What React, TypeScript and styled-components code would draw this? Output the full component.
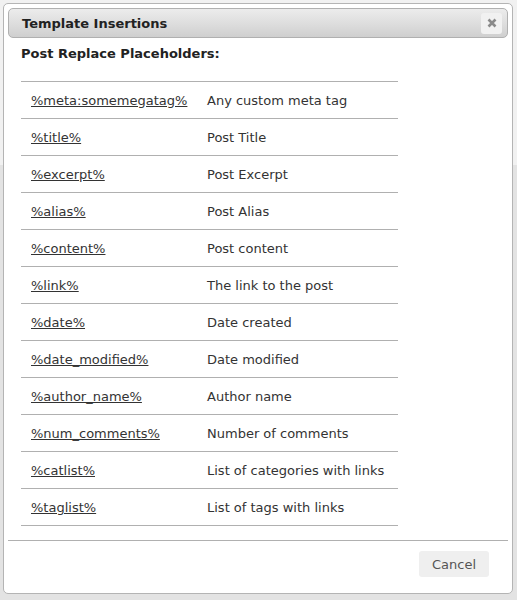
import React from "react";
import styled, { createGlobalStyle } from "styled-components";

const Global = createGlobalStyle`
  html, body { margin: 0; padding: 0; }
  body {
    background: linear-gradient(to bottom, #f1f1f1 0, #f1f1f1 165px, #e3e3e3 165px, #e3e3e3 100%);
    min-height: 600px;
    font-family: "DejaVu Sans", Verdana, sans-serif;
    color: #333;
  }
`;

const Dialog = styled.div`
  margin: 3px 0 0 3px;
  width: 510px;
  height: 591px;
  box-sizing: border-box;
  border: 1px solid #b4b4b4;
  border-radius: 5px;
  background: #fff;
  padding: 4px;
  display: flex;
  flex-direction: column;
`;

const TitleBar = styled.div`
  height: 30px;
  box-sizing: border-box;
  border: 1px solid #b0b0b0;
  border-radius: 5px;
  background: linear-gradient(to bottom, #ececec 0%, #dedede 50%, #cfcfcf 100%);
  display: flex;
  align-items: center;
  justify-content: space-between;
  padding: 0 5px 0 13px;
`;

const Title = styled.span`
  font-weight: bold;
  font-size: 13px;
  color: #222;
`;

const CloseButton = styled.button`
  width: 21px;
  height: 21px;
  border: none;
  border-radius: 3px;
  background: #f1f1f1;
  display: flex;
  align-items: center;
  justify-content: center;
  padding: 0;
`;

const Content = styled.div`
  flex: 1;
  padding: 0 13px;
`;

const Heading = styled.h3`
  margin: 0;
  padding-top: 8px;
  height: 35px;
  font-size: 13px;
  font-weight: bold;
  line-height: 16px;
  color: #222;
`;

const Table = styled.table`
  width: 377px;
  border-collapse: collapse;
  font-size: 13px;
  border-top: 1px solid #b0b0b0;
`;

const Row = styled.tr`
  height: 37px;
  border-bottom: 1px solid #b0b0b0;
`;

const KeyCell = styled.td`
  width: 176px;
  padding: 0 0 0 10px;
  vertical-align: middle;
`;

const DescCell = styled.td`
  padding: 0;
  vertical-align: middle;
  color: #333;
`;

const Tag = styled.a`
  color: #333;
  text-decoration: underline;
`;

const Footer = styled.div`
  border-top: 1px solid #b0b0b0;
  height: 49px;
  box-sizing: border-box;
  display: flex;
  justify-content: flex-end;
  align-items: flex-start;
  padding: 10px 19px 0 0;
`;

const CancelButton = styled.button`
  width: 70px;
  height: 26px;
  border: none;
  border-radius: 3px;
  background: #efefef;
  color: #555;
  font-family: "DejaVu Sans", Verdana, sans-serif;
  font-size: 13px;
  padding: 0;
`;

const rows: [string, string][] = [
  ["%meta:somemegatag%", "Any custom meta tag"],
  ["%title%", "Post Title"],
  ["%excerpt%", "Post Excerpt"],
  ["%alias%", "Post Alias"],
  ["%content%", "Post content"],
  ["%link%", "The link to the post"],
  ["%date%", "Date created"],
  ["%date_modified%", "Date modified"],
  ["%author_name%", "Author name"],
  ["%num_comments%", "Number of comments"],
  ["%catlist%", "List of categories with links"],
  ["%taglist%", "List of tags with links"],
];

export default function App() {
  return (
    <>
      <Global />
      <Dialog>
        <TitleBar>
          <Title>Template Insertions</Title>
          <CloseButton aria-label="close">
            <svg width="10" height="10" viewBox="0 0 10 10">
              <path d="M1.5 1.5 L8.5 8.5 M8.5 1.5 L1.5 8.5" stroke="#8a8a8a" strokeWidth="2.6" strokeLinecap="butt" />
            </svg>
          </CloseButton>
        </TitleBar>
        <Content>
          <Heading>Post Replace Placeholders:</Heading>
          <Table>
            <tbody>
              {rows.map(([k, d]) => (
                <Row key={k}>
                  <KeyCell>
                    <Tag href="#">{k}</Tag>
                  </KeyCell>
                  <DescCell>{d}</DescCell>
                </Row>
              ))}
            </tbody>
          </Table>
        </Content>
        <Footer>
          <CancelButton>Cancel</CancelButton>
        </Footer>
      </Dialog>
    </>
  );
}
